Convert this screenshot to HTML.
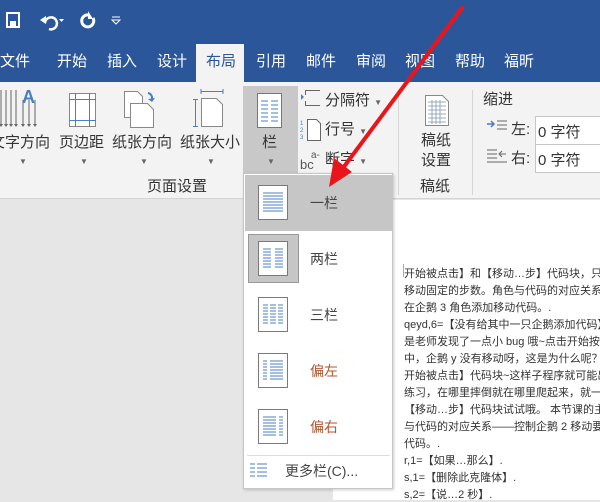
<!DOCTYPE html>
<html><head><meta charset="utf-8"><style>
*{margin:0;padding:0;box-sizing:border-box}
body{width:600px;height:500px;overflow:hidden;position:relative;background:#e6e6e6;font-family:"Liberation Sans","Noto Sans CJK SC",sans-serif;color:#444}
.a{position:absolute}
.title{left:0;top:0;width:600px;height:82px;background:#2b579a}
.tab{top:50px;color:#fff;font-size:15px}
.rib{left:0;top:82px;width:600px;height:117px;background:#f3f3f3;border-bottom:1px solid #d4d4d4}
.lbl{font-size:15px;color:#333;white-space:nowrap;line-height:18px}
.dd{font-size:8px;color:#666}
.doc{left:333px;top:200px;width:267px;height:300px;background:#fff}
.line{left:404px;font-size:11px;color:#333;white-space:nowrap}
.menu{left:243px;top:173px;width:150px;height:316px;background:#fff;border:1px solid #c6c6c6;box-shadow:1px 1px 3px rgba(0,0,0,.2)}
</style></head><body>
<div class="a title"></div>
<svg class="a" style="left:0;top:0" width="160" height="44">
<rect x="7" y="13" width="12" height="14" fill="none" stroke="#fff" stroke-width="2"/><rect x="10" y="21" width="6" height="5" fill="#fff"/>
<path d="M45 23 a6 6 0 1 1 4 6" fill="none" stroke="#fff" stroke-width="2.5"/><path d="M40 20 l6 -4 v8z" fill="#fff"/><path d="M59 19 h5 l-2.5 3z" fill="#fff"/>
<path d="M89 15 a6 6 0 1 0 4 3" fill="none" stroke="#fff" stroke-width="3"/><path d="M88 11 v8 h5z" fill="#fff"/>
<path d="M112 20 h8 l-4 4z M112 17 h8" fill="none" stroke="#fff"/>
</svg>
<div class="a" style="left:196px;top:44px;width:48px;height:38px;background:#f3f3f3"></div>
<div class="a tab" style="left:0">文件</div>
<div class="a tab" style="left:57px">开始</div>
<div class="a tab" style="left:107px">插入</div>
<div class="a tab" style="left:157px">设计</div>
<div class="a tab" style="left:206px;color:#2b579a">布局</div>
<div class="a tab" style="left:256px">引用</div>
<div class="a tab" style="left:306px">邮件</div>
<div class="a tab" style="left:356px">审阅</div>
<div class="a tab" style="left:405px">视图</div>
<div class="a tab" style="left:455px">帮助</div>
<div class="a tab" style="left:504px">福昕</div>
<div class="a rib"></div>
<div class="a" style="left:243px;top:86px;width:55px;height:87px;background:#c8c8c8"></div>
<svg class="a" style="left:0;top:86px" width="600" height="50">
<g stroke="#666" stroke-width="1"><path d="M1 4v34M6 4v34M11 4v34M16 4v34M23 14v24M29 14v24M35 14v24"/></g>
<g fill="#666"><path d="M-1 38h4l-2 3zM4 38h4l-2 3zM9 38h4l-2 3zM14 38h4l-2 3zM21 38h4l-2 3zM27 38h4l-2 3zM33 38h4l-2 3z"/></g>
<text x="22" y="17" fill="#4a7fc1" font-size="18" font-weight="bold" font-family="Liberation Sans">A</text>
<rect x="69.5" y="7.5" width="26" height="33" fill="#fff" stroke="#888"/><path d="M75.5 7v34M89.5 7v34M69 13.5h27M69 34.5h27" stroke="#4a7fc1"/>
<path d="M124.5 5.5h13l5 5v21h-18z" fill="#fff" stroke="#888"/><path d="M130.5 17.5h17l6 6v18h-23z" fill="#fff" stroke="#888"/><path d="M148 7a5 5 0 0 1 4 6" fill="none" stroke="#4a7fc1" stroke-width="2"/><path d="M148 13l4 3 3-4z" fill="#4a7fc1"/>
<path d="M201 5.5h22M201 3v5M223 3v5M195.5 13v28M193 13.5h5M193 40.5h5" stroke="#4a7fc1"/><path d="M201.5 12.5h15l6 6v22h-21z" fill="#fff" stroke="#888"/>
<rect x="257.5" y="7.5" width="24" height="34" fill="#fff" stroke="#777"/><g stroke="#4a7fc1"><path d="M261 15h7M271 15h7M261 19h7M271 19h7M261 23h7M271 23h7M261 27h7M271 27h7M261 31h7M271 31h7M261 35h7M271 35h7"/></g>
<path d="M301 8l3 3-3 3z" fill="#4a7fc1"/><path d="M305 4.5h15M305 19.5h15M305.5 4v5M305.5 15v5" stroke="#666" fill="none"/>
<path d="M425.5 9.5h17l6 6v24h-23z" fill="#fff" stroke="#888"/><g stroke="#9ab"><path d="M428 16h18M428 20h18M428 24h18M428 28h18M428 32h18M428 36h18M432 14v24M436 14v24M440 14v24"/></g>
<path d="M487 38h7M491 35l3 3-3 3" stroke="#4a7fc1" fill="none" stroke-width="1.5"/><path d="M497 35h10M497 39h10M497 43h10" stroke="#666"/>
</svg>
<svg class="a" style="left:300px;top:116px" width="25" height="60"><path d="M7.5 3.5h9l4 4v17h-13z" fill="#fff" stroke="#666"/><text x="0" y="9" font-size="6" fill="#4a7fc1">1</text><text x="0" y="16" font-size="6" fill="#4a7fc1">2</text><text x="0" y="23" font-size="6" fill="#4a7fc1">3</text><text x="0" y="53" font-size="13" fill="#555">bc</text><text x="11" y="42" font-size="10" fill="#555">a-</text></svg>
<svg class="a" style="left:486px;top:148px" width="22" height="16"><path d="M1 2h10M1 6h10M1 10h10M1 14h20M20 6h-6M16 3l-3 3 3 3" stroke="#666" fill="none"/></svg>
<div class="a lbl" style="left:-10px;top:134px">文字方向</div>
<div class="a lbl" style="left:59px;top:134px">页边距</div>
<div class="a lbl" style="left:112px;top:134px">纸张方向</div>
<div class="a lbl" style="left:180px;top:134px">纸张大小</div>
<div class="a lbl" style="left:262px;top:134px">栏</div>
<div class="a dd" style="left:19px;top:157px">▼</div>
<div class="a dd" style="left:80px;top:157px">▼</div>
<div class="a dd" style="left:140px;top:157px">▼</div>
<div class="a dd" style="left:207px;top:157px">▼</div>
<div class="a dd" style="left:267px;top:157px">▼</div>
<div class="a lbl" style="left:147px;top:178px">页面设置</div>
<div class="a lbl" style="left:325px;top:92px">分隔符 <span class="dd">▼</span></div>
<div class="a lbl" style="left:325px;top:121px">行号 <span class="dd">▼</span></div>
<div class="a lbl" style="left:325px;top:151px">断字 <span class="dd">▼</span></div>
<div class="a" style="left:398px;top:90px;width:1px;height:105px;background:#d6d6d6"></div>
<div class="a" style="left:472px;top:90px;width:1px;height:105px;background:#d6d6d6"></div>
<div class="a lbl" style="left:421px;top:131px;line-height:20px">稿纸<br>设置</div>
<div class="a lbl" style="left:420px;top:178px">稿纸</div>
<div class="a lbl" style="left:483px;top:91px">缩进</div>
<div class="a lbl" style="left:511px;top:121px">左:</div>
<div class="a lbl" style="left:511px;top:150px">右:</div>
<div class="a" style="left:535px;top:116px;width:70px;height:29px;background:#fff;border:1px solid #c6c6c6;font-size:15px;padding:4px 2px;color:#333">0 字符</div>
<div class="a" style="left:535px;top:144px;width:70px;height:29px;background:#fff;border:1px solid #c6c6c6;font-size:15px;padding:4px 2px;color:#333">0 字符</div>
<div class="a doc"></div>
<div class="a" style="left:403px;top:264px;width:1px;height:13px;background:#aaa"></div>
<div class="a line" style="top:265px">开始被点击】和【移动…步】代码块，只留</div>
<div class="a line" style="top:282px">移动固定的步数。角色与代码的对应关系一</div>
<div class="a line" style="top:299px">在企鹅 3 角色添加移动代码。.</div>
<div class="a line" style="top:316px">qeyd,6=【没有给其中一只企鹅添加代码】</div>
<div class="a line" style="top:333px">是老师发现了一点小 bug 哦~点击开始按钮</div>
<div class="a line" style="top:350px">中，企鹅 y 没有移动呀，这是为什么呢？老</div>
<div class="a line" style="top:367px">开始被点击】代码块~这样子程序就可能出</div>
<div class="a line" style="top:384px">练习，在哪里摔倒就在哪里爬起来，就一定</div>
<div class="a line" style="top:401px">【移动…步】代码块试试哦。 本节课的主</div>
<div class="a line" style="top:418px">与代码的对应关系——控制企鹅 2 移动要在</div>
<div class="a line" style="top:435px">代码。.</div>
<div class="a line" style="top:452px">r,1=【如果…那么】.</div>
<div class="a line" style="top:469px">s,1=【删除此克隆体】.</div>
<div class="a line" style="top:486px">s,2=【说…2 秒】.</div>
<div class="a menu">
<div class="a" style="left:1px;top:1px;width:147px;height:56px;background:#c6c6c6"></div>
<div class="a" style="left:4px;top:60px;width:51px;height:49px;background:#c6c6c6;border:1px solid #999"></div>
<div class="a" style="left:3px;top:281px;width:143px;height:1px;background:#ddd"></div>
</div>
<svg class="a" style="left:243px;top:173px" width="150" height="316">
<g fill="#fff" stroke="#7a7a7a"><rect x="15.5" y="12.5" width="29" height="34"/><rect x="15.5" y="68.5" width="29" height="34"/><rect x="15.5" y="124.5" width="29" height="34"/><rect x="15.5" y="180.5" width="29" height="34"/><rect x="15.5" y="236.5" width="29" height="34"/></g>
<g stroke="#4a7fc1">
<path d="M20 20h20M20 23h20M20 26h20M20 29h20M20 32h20M20 35h20M20 38h20"/>
<path d="M20 76h8M32 76h8M20 79h8M32 79h8M20 82h8M32 82h8M20 85h8M32 85h8M20 88h8M32 88h8M20 91h8M32 91h8M20 94h8M32 94h8"/>
<path d="M20 132h5M27 132h6M35 132h5M20 135h5M27 135h6M35 135h5M20 138h5M27 138h6M35 138h5M20 141h5M27 141h6M35 141h5M20 144h5M27 144h6M35 144h5M20 147h5M27 147h6M35 147h5M20 150h5M27 150h6M35 150h5"/>
<path d="M20 188h4M27 188h13M20 191h4M27 191h13M20 194h4M27 194h13M20 197h4M27 197h13M20 200h4M27 200h13M20 203h4M27 203h13M20 206h4M27 206h13"/>
<path d="M20 244h13M36 244h4M20 247h13M36 247h4M20 250h13M36 250h4M20 253h13M36 253h4M20 256h13M36 256h4M20 259h13M36 259h4M20 262h13M36 262h4"/>
<path d="M7 291h5M14 291h10M7 295h5M14 295h10M7 299h5M14 299h10M7 303h5M14 303h10"/>
</g>
<g font-size="14" fill="#444" font-family="Liberation Sans,Noto Sans CJK SC,sans-serif"><text x="67" y="35">一栏</text><text x="67" y="91">两栏</text><text x="67" y="147">三栏</text><text x="67" y="203" fill="#b5532c">偏左</text><text x="67" y="259" fill="#b5532c">偏右</text><text x="42" y="303">更多栏(C)...</text></g>
</svg>
<svg class="a" style="left:0;top:0" width="600" height="500">
<line x1="462" y1="8" x2="343" y2="168" stroke="#e8161b" stroke-width="4" stroke-linecap="round"/>
<path d="M329 187 L334 158 L352 172 Z" fill="#e8161b"/>
</svg>
</body></html>
